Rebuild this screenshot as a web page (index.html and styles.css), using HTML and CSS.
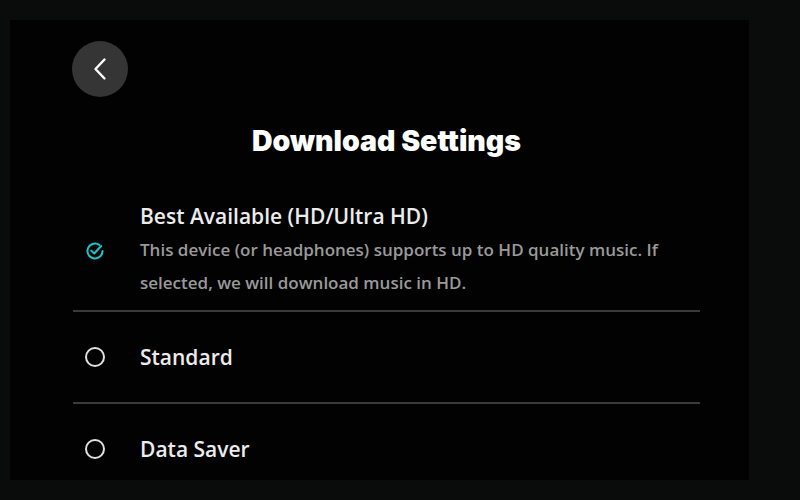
FILE: index.html
```html
<!DOCTYPE html>
<html lang="en">
<head>
    <meta charset="UTF-8">
    <meta name="viewport" content="width=device-width, initial-scale=1.0">
    <title>Download Settings</title>
    <link rel="stylesheet" href="styles.css">
</head>
<body>
    <div class="panel">
        <button class="back-btn" aria-label="Back">
            <svg width="16" height="24" viewBox="0 0 16 24">
                <path d="M12.5 2.5 L3.5 12 L12.5 21.5" fill="none" stroke="#fff" stroke-width="2.4" stroke-linecap="round" stroke-linejoin="round"/>
            </svg>
        </button>

        <div class="content">
            <h1>Download Settings</h1>

            <div class="options">
                <div class="option option-first">
                    <span class="icon">
                        <svg width="20" height="20" viewBox="0 0 24 24">
                            <path d="M21 12a9 9 0 1 1-3.6-7.2" fill="none" stroke="#1fc4cb" stroke-width="2.4" stroke-linecap="round"/>
                            <path d="M7.5 11.5 L11 15 L19.5 6" fill="none" stroke="#1fc4cb" stroke-width="2.4" stroke-linecap="round" stroke-linejoin="round"/>
                        </svg>
                    </span>
                    <div class="option-text">
                        <p class="label">Best Available (HD/Ultra HD)</p>
                        <p class="desc">This device (or headphones) supports up to HD quality music. If selected, we will download music in HD.</p>
                    </div>
                </div>

                <div class="option">
                    <span class="icon"><span class="radio"></span></span>
                    <p class="label">Standard</p>
                </div>

                <div class="option">
                    <span class="icon"><span class="radio"></span></span>
                    <p class="label">Data Saver</p>
                </div>
            </div>
        </div>
    </div>
</body>
</html>
```

FILE: styles.css
```css
/* Global Styles */
body {
    margin: 0;
    padding: 0;
    background-color: #0a0b0b;
    font-family: 'Open Sans', sans-serif;
    color: #e6e6e6;
    overflow: hidden;
}

.panel {
    width: 739px;
    height: 460px;
    margin: 20px 0 0 10px;
    padding-top: 21px;
    box-sizing: border-box;
    background-color: #020202;
}

.back-btn {
    display: flex;
    align-items: center;
    justify-content: center;
    width: 56px;
    height: 56px;
    margin-left: 62px;
    padding: 0;
    border: none;
    border-radius: 50%;
    background-color: #353535;
    cursor: pointer;
}

.content {
    width: 627px;
    margin-left: 63px;
}

h1 {
    margin: 27px 0 0;
    font-family: 'Inter', sans-serif;
    font-size: 28.5px;
    font-weight: 900;
    line-height: 34px;
    text-align: center;
    color: #ffffff;
}

.option {
    display: flex;
    align-items: center;
    height: 90px;
    border-top: 2px solid #3a3a3a;
}

.option-first {
    height: auto;
    padding: 45px 0 11px;
    border-top: none;
}

.icon {
    display: flex;
    align-items: center;
    justify-content: center;
    width: 20px;
    height: 20px;
    margin: 0 35px 0 12px;
    flex-shrink: 0;
}

.radio {
    width: 16px;
    height: 16px;
    border: 2px solid #e0e0e0;
    border-radius: 50%;
}

.label {
    margin: 0;
    font-size: 21px;
    font-weight: 600;
    line-height: 26px;
    color: #ececec;
}

.desc {
    margin: 4px 0 0;
    font-size: 17px;
    font-weight: 600;
    line-height: 33px;
    color: #9a9a9a;
}
```
